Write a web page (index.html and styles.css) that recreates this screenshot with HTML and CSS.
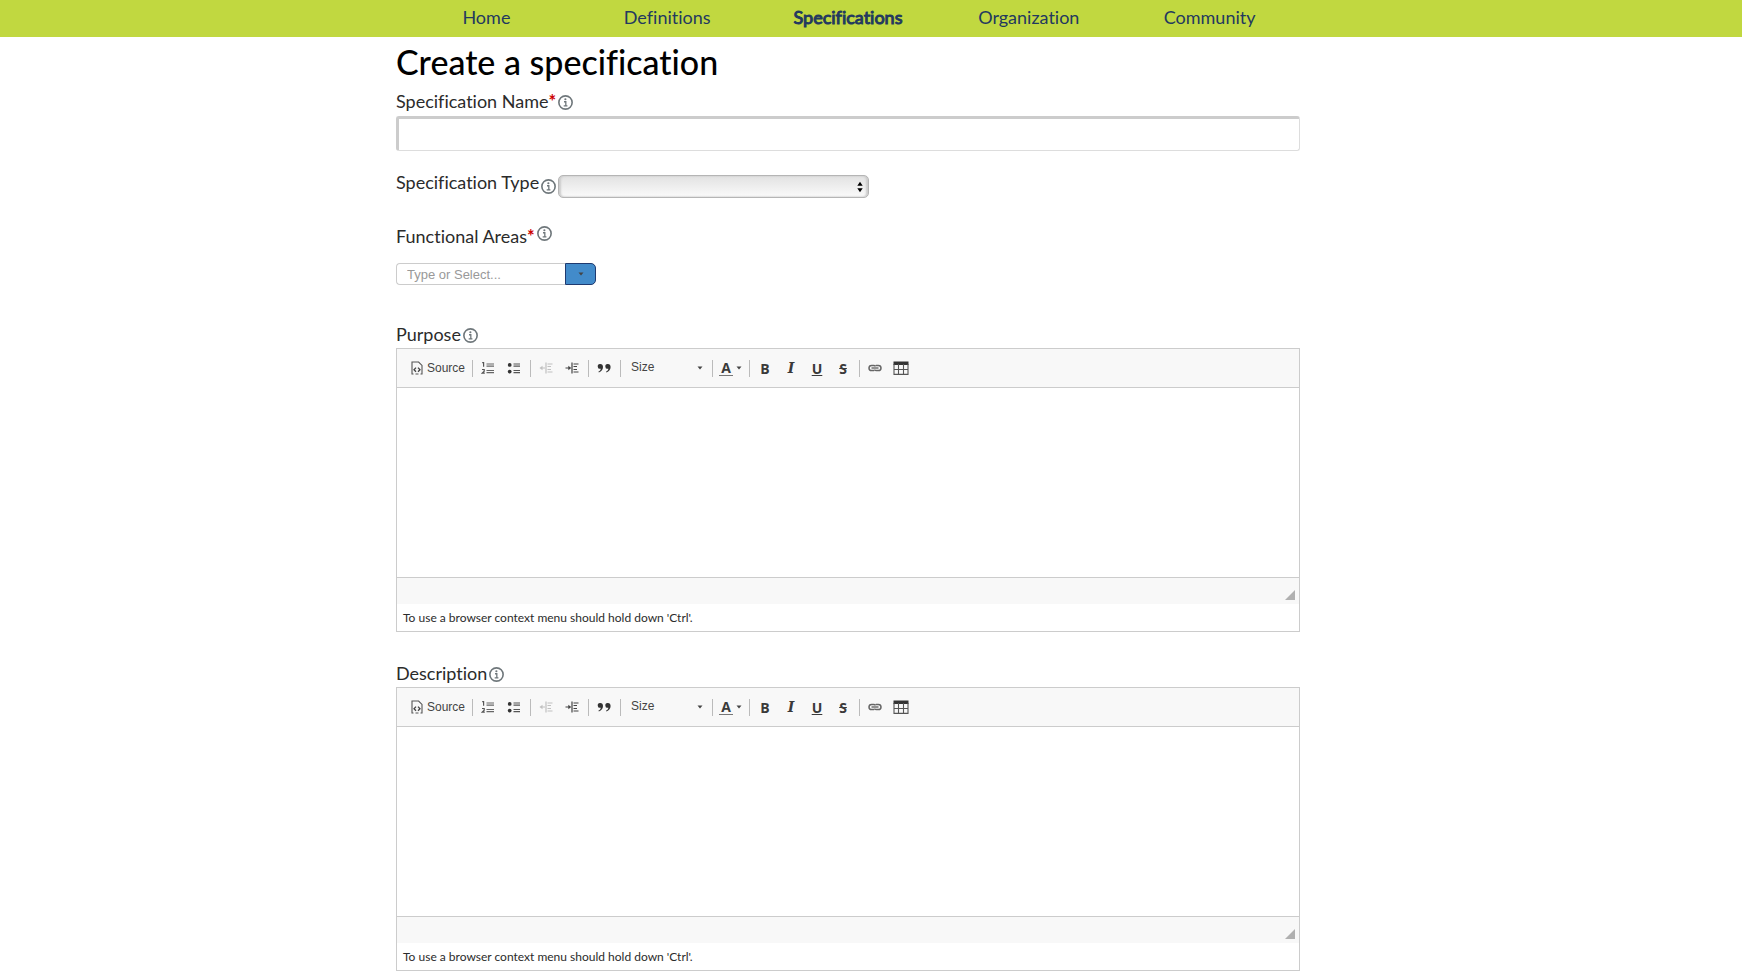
FILE: index.html
```html
<!DOCTYPE html>
<html lang="en">
  <head>
    <meta charset="UTF-8" />
    <meta name="viewport" content="width=device-width, initial-scale=1.0" />
    <title>Create a specification</title>
    <link rel="stylesheet" href="styles.css">
  </head>
  <body>
    <!-- shared icons -->
    <svg class="icon-defs" width="0" height="0" aria-hidden="true">
      <symbol id="icon-info" viewBox="0 0 14 14">
        <circle cx="7" cy="7" r="6.2" fill="none" stroke="#6f777b" stroke-width="1.5" />
        <circle cx="6.9" cy="4" r="1" fill="#6f777b" />
        <path d="M5.6 6.3h1.7v4M5.3 10.2h3.5" fill="none" stroke="#6f777b" stroke-width="1.2" />
      </symbol>
      <symbol id="icon-source" viewBox="0 0 12 14">
        <path d="M2.5 13H1V1h6.6L11 4.4V13H9.5M4.500 13h3" fill="none" stroke="#555" stroke-width="1.1" />
        <path d="M5 6.600 3 8.700l2 2.100M7 6.600l2 2.100-2 2.100" fill="none" stroke="#444" stroke-width="1.3" />
      </symbol>
      <symbol id="icon-ol" viewBox="0 0 14 14">
        <path d="M1.200 1.700h1.400v4M1 8.500h2.200v1.700L1.200 12.200h2.600" fill="none" stroke="#555" stroke-width="1.2" />
        <path d="M5.500 3h7.500M5.500 5.200h7.500M5.500 9.500h7.500M5.500 11.700h7.500" stroke="#666" stroke-width="1.2" />
      </symbol>
      <symbol id="icon-ul" viewBox="0 0 14 14">
        <circle cx="2.700" cy="3.900" r="1.900" fill="#333" />
        <circle cx="2.700" cy="10.600" r="1.900" fill="#333" />
        <path d="M6.500 3h6.500M6.500 5.200h6.500M6.500 9.500h6.500M6.500 11.700h6.500" stroke="#555" stroke-width="1.2" />
      </symbol>
      <symbol id="icon-outdent" viewBox="0 0 14 14">
        <path d="M7 1.500v11M8.500 3h5M8.500 5.500h3.500M8.500 8.500h3.500M8.500 11h5M2 7h4" fill="none" stroke="#444" stroke-width="1.2" />
        <path d="M.5 7 3.500 4.800v4.400z" fill="#444" />
      </symbol>
      <symbol id="icon-indent" viewBox="0 0 14 14">
        <path d="M7 1.500v11M8.500 3h5M8.500 5.500h3.500M8.500 8.500h3.500M8.500 11h5M.5 7h4" fill="none" stroke="#444" stroke-width="1.2" />
        <path d="M6.300 7 3.300 4.800v4.400z" fill="#444" />
      </symbol>
      <symbol id="icon-quote" viewBox="0 0 14 14">
        <path d="M3.300 3a2.400 2.400 0 1 0 .5 4.700C3.600 9 2.700 10 1.400 10.600l.5.900C4.500 10.500 6 8.500 6 6 6 4.200 5 3 3.300 3zM10.900 3a2.400 2.400 0 1 0 .5 4.700c-.2 1.300-1.100 2.300-2.400 2.900l.5.900c2.600-1 4.100-3 4.100-5.500 0-1.800-1-3-2.700-3z" fill="#333" />
      </symbol>
      <symbol id="icon-link" viewBox="0 0 14 14">
        <path d="M6.200 9.600H3.600a2.600 2.600 0 0 1 0-5.200h2a2.600 2.600 0 0 1 2 1M7.800 4.400h2.600a2.600 2.600 0 0 1 0 5.200h-2a2.600 2.600 0 0 1-2-1" fill="none" stroke="#666" stroke-width="1.500" />
        <path d="M3.500 7h7" stroke="#666" stroke-width="1.400" />
      </symbol>
      <symbol id="icon-table" viewBox="0 0 16 14">
        <path d="M.5.500h15v3.500H.500z" fill="#333" />
        <path d="M1 3v10.400h14V3M5.500 3v10M10.500 3v10M1 8.500h14" fill="none" stroke="#555" stroke-width="1.100" />
      </symbol>
      <symbol id="icon-caret" viewBox="0 0 6 4">
        <path d="M.5.500h5L3 3.500z" fill="#444" />
      </symbol>
      <symbol id="icon-updown" viewBox="0 0 6 12">
        <path d="M.3 4.800h5.400L3 .7zM.3 7.200h5.400L3 11.300z" fill="#000" />
      </symbol>
      <symbol id="icon-grip" viewBox="0 0 10 10">
        <path d="M10 0v10H0z" fill="#b0b0b0" />
      </symbol>
    </svg>

    <nav class="navbar">
      <ul class="nav-list">
        <li><a href="#">Home</a></li>
        <li><a href="#">Definitions</a></li>
        <li><a href="#" class="active">Specifications</a></li>
        <li><a href="#">Organization</a></li>
        <li><a href="#">Community</a></li>
      </ul>
    </nav>

    <main class="page">
      <form class="spec-form">
        <h1>Create a specification</h1>

        <div class="field">
          <div class="field-label">
            <label for="spec_name">Specification Name<span class="required">*</span></label>
            <svg class="info"><use href="#icon-info" /></svg>
          </div>
          <input type="text" id="spec_name" class="text-input" />
        </div>

        <div class="field field-type">
          <div class="field-label info-low">
            <label for="spec_type">Specification Type</label>
            <svg class="info"><use href="#icon-info" /></svg>
          </div>
          <div class="select-wrap">
            <select id="spec_type" class="type-select">
              <option></option>
            </select>
            <svg class="updown"><use href="#icon-updown" /></svg>
          </div>
        </div>

        <div class="field field-areas">
          <div class="field-label info-high">
            <label for="areas">Functional Areas<span class="required">*</span></label>
            <svg class="info"><use href="#icon-info" /></svg>
          </div>
          <div class="combo">
            <input type="text" id="areas" class="combo-input" placeholder="Type or Select..." />
            <button type="button" class="combo-button" aria-label="Show all">
              <svg class="caret"><use href="#icon-caret" /></svg>
            </button>
          </div>
        </div>

        <div class="field field-editor">
          <div class="field-label">
            <label for="purpose">Purpose</label>
            <svg class="info"><use href="#icon-info" /></svg>
          </div>
          <div class="editor">
            <div class="toolbar">
              <div class="tool-group">
                <button type="button" class="tool tool-source"><svg><use href="#icon-source" /></svg>Source</button>
              </div>
              <div class="tool-group">
                <button type="button" class="tool" aria-label="Numbered list"><svg><use href="#icon-ol" /></svg></button>
                <button type="button" class="tool" aria-label="Bulleted list"><svg><use href="#icon-ul" /></svg></button>
              </div>
              <div class="tool-group">
                <button type="button" class="tool" aria-label="Decrease indent" disabled><svg><use href="#icon-outdent" /></svg></button>
                <button type="button" class="tool" aria-label="Increase indent"><svg><use href="#icon-indent" /></svg></button>
              </div>
              <div class="tool-group">
                <button type="button" class="tool" aria-label="Block quote"><svg><use href="#icon-quote" /></svg></button>
              </div>
              <div class="tool-group size-wrap">
                <select class="size-select" aria-label="Font size">
                  <option>Size</option>
                </select>
                <svg class="caret"><use href="#icon-caret" /></svg>
              </div>
              <div class="tool-group">
                <button type="button" class="tool tool-color" aria-label="Text color"><span class="color-letter">A</span><svg class="caret"><use href="#icon-caret" /></svg></button>
              </div>
              <div class="tool-group">
                <button type="button" class="tool">B</button>
                <button type="button" class="tool tool-italic">I</button>
                <button type="button" class="tool tool-underline">U</button>
                <button type="button" class="tool tool-strike">S</button>
              </div>
              <div class="tool-group">
                <button type="button" class="tool" aria-label="Link"><svg><use href="#icon-link" /></svg></button>
                <button type="button" class="tool" aria-label="Table"><svg class="wide"><use href="#icon-table" /></svg></button>
              </div>
            </div>
            <textarea id="purpose" class="editor-body"></textarea>
            <div class="editor-footer"><svg class="grip"><use href="#icon-grip" /></svg></div>
            <p class="editor-hint">To use a browser context menu should hold down 'Ctrl'.</p>
          </div>
        </div>

        <div class="field field-editor">
          <div class="field-label">
            <label for="description">Description</label>
            <svg class="info"><use href="#icon-info" /></svg>
          </div>
          <div class="editor">
            <div class="toolbar">
              <div class="tool-group">
                <button type="button" class="tool tool-source"><svg><use href="#icon-source" /></svg>Source</button>
              </div>
              <div class="tool-group">
                <button type="button" class="tool" aria-label="Numbered list"><svg><use href="#icon-ol" /></svg></button>
                <button type="button" class="tool" aria-label="Bulleted list"><svg><use href="#icon-ul" /></svg></button>
              </div>
              <div class="tool-group">
                <button type="button" class="tool" aria-label="Decrease indent" disabled><svg><use href="#icon-outdent" /></svg></button>
                <button type="button" class="tool" aria-label="Increase indent"><svg><use href="#icon-indent" /></svg></button>
              </div>
              <div class="tool-group">
                <button type="button" class="tool" aria-label="Block quote"><svg><use href="#icon-quote" /></svg></button>
              </div>
              <div class="tool-group size-wrap">
                <select class="size-select" aria-label="Font size">
                  <option>Size</option>
                </select>
                <svg class="caret"><use href="#icon-caret" /></svg>
              </div>
              <div class="tool-group">
                <button type="button" class="tool tool-color" aria-label="Text color"><span class="color-letter">A</span><svg class="caret"><use href="#icon-caret" /></svg></button>
              </div>
              <div class="tool-group">
                <button type="button" class="tool">B</button>
                <button type="button" class="tool tool-italic">I</button>
                <button type="button" class="tool tool-underline">U</button>
                <button type="button" class="tool tool-strike">S</button>
              </div>
              <div class="tool-group">
                <button type="button" class="tool" aria-label="Link"><svg><use href="#icon-link" /></svg></button>
                <button type="button" class="tool" aria-label="Table"><svg class="wide"><use href="#icon-table" /></svg></button>
              </div>
            </div>
            <textarea id="description" class="editor-body"></textarea>
            <div class="editor-footer"><svg class="grip"><use href="#icon-grip" /></svg></div>
            <p class="editor-hint">To use a browser context menu should hold down 'Ctrl'.</p>
          </div>
        </div>
      </form>
    </main>
  </body>
</html>
```

FILE: styles.css
```css
* {
  box-sizing: border-box;
}
body {
  margin: 0;
  background-color: #fff;
  color: #2b2b2b;
  font-family: Lato, sans-serif;
  font-size: 18px;
  line-height: 24px;
  font-variant-ligatures: none;
}
.icon-defs {
  display: block;
}

/* top navigation */
.navbar {
  background-color: #c1d840;
  padding-right: 46px;
}
.nav-list {
  display: flex;
  max-width: 904px;
  height: 37px;
  margin: 0 auto;
  padding: 0;
  list-style: none;
}
.nav-list li {
  flex: 1;
  text-align: center;
  line-height: 34px;
}
.nav-list a {
  color: #23395f;
  text-decoration: none;
}
.nav-list .active {
  -webkit-text-stroke: 1px #23395f;
}

/* form */
.page {
  padding-right: 46px;
}
.spec-form {
  max-width: 904px;
  margin: 0 auto;
}
h1 {
  margin: 0;
  padding: 5px 0 7px;
  color: #000;
  font-size: 34px;
  line-height: 40px;
  font-weight: 500;
}
.field-label {
  display: flex;
  align-items: center;
  gap: 2px;
}
.required {
  color: #c00;
  font-weight: bold;
}
.info {
  width: 15px;
  height: 15px;
  margin-top: 2px;
}
.info-low .info {
  margin-top: 9px;
}
.info-high .info {
  margin-top: 0;
  margin-bottom: 6px;
}
.text-input {
  display: block;
  width: 100%;
  height: 35px;
  margin-top: 3px;
  padding: 0 8px;
  border: 1px solid #ddd;
  border-top: 3px solid #ccc;
  border-left: 3px solid #ccc;
  border-radius: 3px;
  font: inherit;
}
.field-type {
  display: flex;
  align-items: flex-start;
  gap: 2px;
  padding-top: 19px;
}
.select-wrap {
  display: grid;
  align-items: center;
  width: 311px;
  margin-top: 5px;
}
.type-select {
  grid-area: 1 / 1;
  width: 100%;
  height: 23px;
  appearance: none;
  border: 1px solid #b5b5b5;
  border-radius: 5px;
  background: linear-gradient(#e2e2e2, #fafafa);
  box-shadow: inset 2px 0 2px #ccc, inset -2px 0 2px #ccc;
}
.updown {
  grid-area: 1 / 1;
  justify-self: end;
  width: 6px;
  height: 12px;
  margin-right: 6px;
  pointer-events: none;
}
.field-areas {
  padding-top: 26px;
}
.combo {
  display: flex;
  width: 200px;
  height: 22px;
  margin-top: 15px;
}
.combo-input {
  flex: 1;
  min-width: 0;
  padding: 0 10px;
  border: 1px solid #ccc;
  border-right: 0;
  border-radius: 4px 0 0 4px;
  font: 13px "Liberation Sans", Arial, sans-serif;
}
.combo-input::placeholder {
  color: #999;
}
.combo-button {
  display: flex;
  align-items: center;
  justify-content: center;
  width: 31px;
  padding: 0;
  border: 1px solid #1f3a70;
  border-radius: 0 5px 5px 0;
  background-color: #428bca;
}
.caret {
  width: 6px;
  height: 4px;
}
.field-editor {
  padding-top: 37px;
}
.field-editor + .field-editor {
  padding-top: 29px;
}

/* rich text editor */
.editor {
  margin-top: 2px;
  border: 1px solid #ccc;
}
.toolbar {
  display: flex;
  align-items: center;
  height: 39px;
  padding-left: 10px;
  border-bottom: 1px solid #ccc;
  background-color: #f8f8f8;
}
.tool-group {
  display: flex;
  align-items: center;
}
.tool-group + .tool-group::before {
  content: "";
  width: 1px;
  height: 17px;
  margin: 0 2px 0 3px;
  background-color: #bbb;
}
.tool {
  display: flex;
  align-items: center;
  justify-content: center;
  width: 26px;
  height: 26px;
  padding: 0;
  border: 0;
  background: none;
  color: #3a3a3a;
  font: bold 14px "Open Sans", sans-serif;
}
.tool svg {
  width: 14px;
  height: 14px;
}
.tool svg.wide {
  width: 16px;
}
.tool:disabled svg {
  opacity: 0.3;
}
.tool-source {
  gap: 4px;
  width: 62px;
  color: #444;
  font: 12px "Liberation Sans", Arial, sans-serif;
}
.tool svg.wide,
.tool-source svg {
  flex: none;
}
.tool-source svg {
  width: 12px;
}
.tool-italic {
  font: italic bold 14px "DejaVu Serif", serif;
}
.tool-underline {
  text-decoration: underline;
}
.tool-strike {
  text-decoration: line-through;
}
.tool-color {
  gap: 3px;
  width: 31px;
}
.tool-color .caret,
.size-wrap .caret {
  width: 6px;
  height: 4px;
}
.color-letter {
  width: 14px;
  border-bottom: 1px solid #777;
  line-height: 14px;
}
.size-select {
  width: 74px;
  height: 26px;
  appearance: none;
  padding: 0 8px 2px;
  border: 0;
  background: none;
  color: #444;
  font: 12px "Liberation Sans", Arial, sans-serif;
}
.size-wrap .caret {
  margin-right: 6px;
}
.editor-body {
  display: block;
  width: 100%;
  height: 189px;
  padding: 16px;
  border: 0;
  resize: none;
  font: inherit;
}
.editor-footer {
  display: flex;
  align-items: flex-end;
  justify-content: flex-end;
  height: 27px;
  padding: 4px;
  border-top: 1px solid #ccc;
  background-color: #f8f8f8;
}
.grip {
  width: 10px;
  height: 10px;
}
.editor-hint {
  margin: 0;
  padding: 5px 6px;
  font-size: 12px;
  line-height: 17px;
}
```
